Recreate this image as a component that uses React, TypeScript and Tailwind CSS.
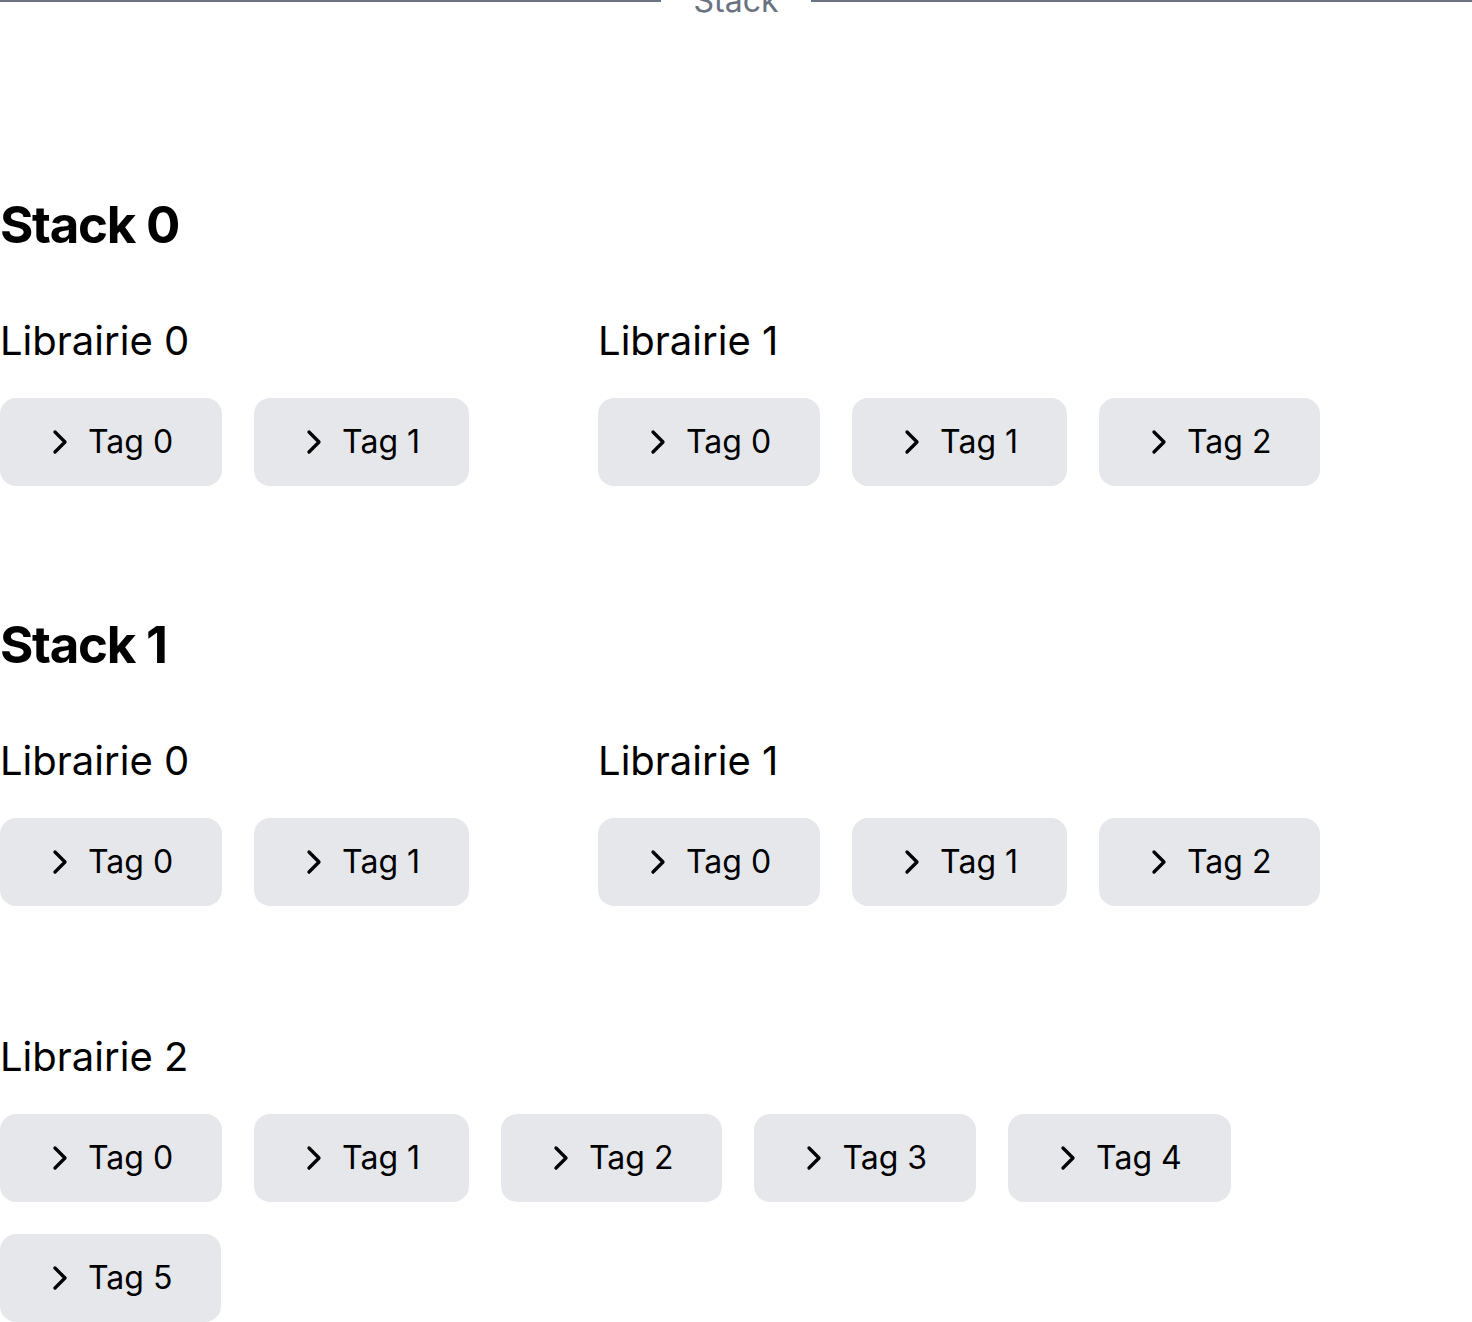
import { ChevronRight } from 'lucide-react';

const stacks = [
  { name: 'Stack 0', libraries: [{ name: 'Librairie 0', tags: 2 }, { name: 'Librairie 1', tags: 3 }] },
  {
    name: 'Stack 1',
    libraries: [
      { name: 'Librairie 0', tags: 2 },
      { name: 'Librairie 1', tags: 3 },
      { name: 'Librairie 2', tags: 6 },
    ],
  },
];

function TagButton({ label }: { label: string }) {
  return (
    <button className="flex items-center gap-2 rounded-2xl bg-gray-200 py-6 pl-10 pr-[49px] text-[32px] leading-10 text-black">
      <ChevronRight className="h-10 w-10" strokeWidth={2} />
      <span>{label}</span>
    </button>
  );
}

export default function App() {
  return (
    <div className="min-h-screen w-full overflow-hidden bg-white" style={{ fontFamily: "Inter, 'Noto Sans', sans-serif" }}>
      <div className="-mt-[19px] flex h-10 items-center">
        <div className="h-0.5 flex-1 bg-gray-500" />
        <span className="px-[33px] text-[32px] leading-10 text-gray-500">Stack</span>
        <div className="h-0.5 flex-1 bg-gray-500" />
      </div>

      {stacks.map((stack, i) => (
        <section key={stack.name} className={i === 0 ? 'mt-[178px]' : 'mt-[133px]'}>
          <h2 className="text-[51px] font-bold leading-none tracking-tight text-black">{stack.name}</h2>
          <div className="mt-[71px] flex flex-wrap gap-x-[129px] gap-y-[131px]">
            {stack.libraries.map((lib) => (
              <div key={lib.name}>
                <h3 className="mb-[37px] text-[40px] leading-10 text-black">{lib.name}</h3>
                <div className="flex flex-wrap gap-8">
                  {Array.from({ length: lib.tags }, (_, t) => (
                    <TagButton key={t} label={`Tag ${t}`} />
                  ))}
                </div>
              </div>
            ))}
          </div>
        </section>
      ))}
    </div>
  );
}
